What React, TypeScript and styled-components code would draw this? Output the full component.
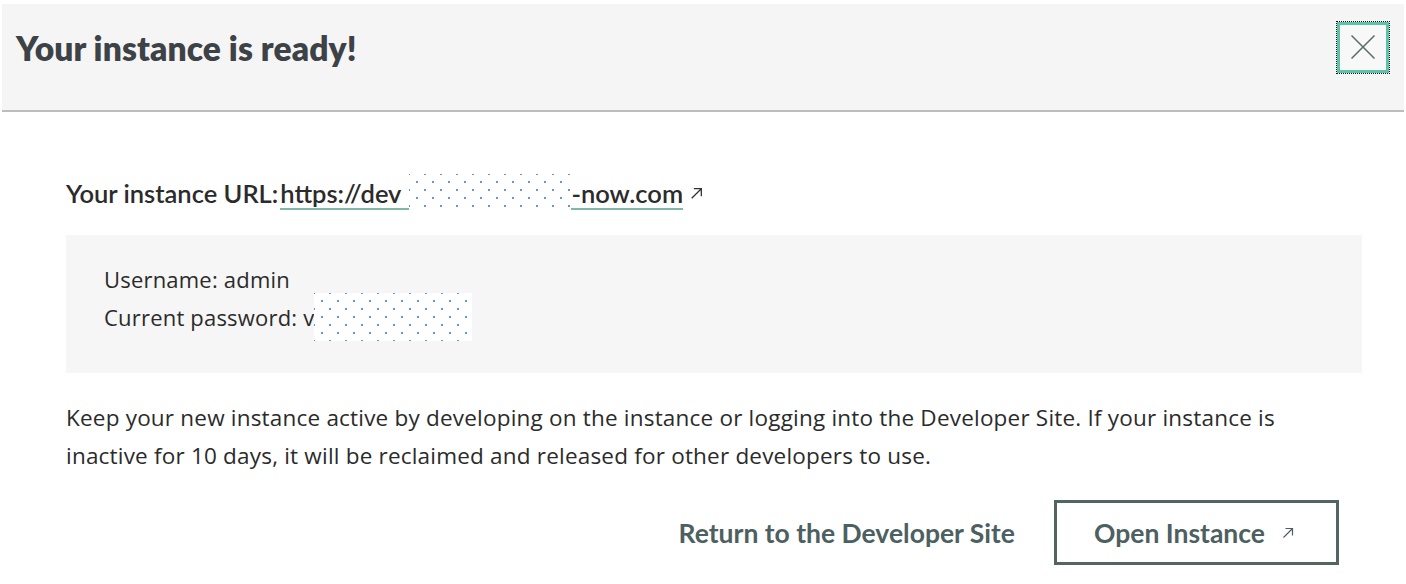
import React from "react";
import styled, { createGlobalStyle } from "styled-components";

const Global = createGlobalStyle`
  html, body { margin: 0; padding: 0; background: #ffffff; }
  body { font-family: "Open Sans", "Noto Sans", sans-serif; }
  * { box-sizing: border-box; }
`;

const Modal = styled.div`
  width: 1406px;
  height: 584px;
  display: flex;
  flex-direction: column;
  padding-top: 4px;
  overflow: hidden;
`;

const Header = styled.header`
  margin: 0 2px;
  height: 108px;
  background: #f5f5f5;
  border-bottom: 2px solid #bdbdbd;
  display: flex;
  align-items: center;
  justify-content: space-between;
  padding: 0 13px 0 14px;
`;

const Title = styled.h1`
  margin: 0 0 18px;
  font-family: Lato, "Open Sans", sans-serif;
  font-weight: 800;
  font-size: 33.6px;
  color: #3d4247;
  letter-spacing: 0.1px;
`;

const CloseButton = styled.button`
  width: 52px;
  height: 51px;
  padding: 0;
  margin: 0 2px 20px 0;
  border: 3px solid #5cc3a9;
  outline: 1.5px dotted #111;
  outline-offset: 0;
  background: #f8f8f8;
  display: flex;
  align-items: center;
  justify-content: center;
  cursor: pointer;
`;

const Body = styled.div`
  padding: 66px 44px 0 66px;
  display: flex;
  flex-direction: column;
`;

const UrlLine = styled.div`
  display: flex;
  align-items: center;
  height: 30px;
  font-family: Lato, "Open Sans", sans-serif;
  font-weight: 600;
  font-size: 25.5px;
  color: #2b2b2b;
`;

const UrlLabel = styled.span`
  margin-right: 2px;
`;

const UrlLink = styled.a`
  display: inline-flex;
  align-items: center;
  color: #2b2b2b;
  text-decoration: none;
`;

const Underlined = styled.span<{ $padRight?: number }>`
  border-bottom: 2px solid #7fb8a8;
  line-height: 30px;
  margin-top: 2px;
  padding-right: ${(p) => p.$padRight ?? 0}px;
`;

const Mask = styled.span<{ $w: number; $h: number }>`
  display: inline-block;
  width: ${(p) => p.$w}px;
  height: ${(p) => p.$h}px;
  flex: none;
  background-color: #ffffff;
  background-image:
    radial-gradient(circle, #5e97d6 1.1px, transparent 1.5px),
    radial-gradient(circle, #5e97d6 1.1px, transparent 1.5px);
  background-size: 16px 16px, 16px 16px;
  background-position: 0 0, 8px 8px;
`;

const ExtArrow = styled.svg<{ $gap: number }>`
  margin-left: ${(p) => p.$gap}px;
  flex: none;
`;

const CredBox = styled.div`
  margin-top: 27px;
  background: #f6f6f6;
  height: 138px;
  padding: 25px 38px;
  display: flex;
  flex-direction: column;
`;

const CredLine = styled.div`
  display: flex;
  align-items: center;
  height: 38px;
  font-family: "Open Sans", "Noto Sans", sans-serif;
  font-size: 22px;
  letter-spacing: 0.2px;
  color: #2b2b2b;
`;

const Paragraph = styled.p`
  margin: 26px 0 0;
  font-family: "Open Sans", "Noto Sans", sans-serif;
  font-size: 22.5px;
  letter-spacing: 0.2px;
  line-height: 38px;
  color: #2b2b2b;
  max-width: 1260px;
`;

const Actions = styled.div`
  margin-top: 25px;
  padding-right: 23px;
  display: flex;
  justify-content: flex-end;
  align-items: center;
  gap: 39px;
`;

const TextButton = styled.button`
  background: none;
  border: none;
  padding: 0;
  font-family: Lato, "Open Sans", sans-serif;
  font-weight: 700;
  font-size: 26.5px;
  color: #4d6061;
  cursor: pointer;
`;

const OutlineButton = styled.button`
  width: 285px;
  height: 65px;
  border: 3px solid #536563;
  background: #ffffff;
  display: flex;
  align-items: center;
  justify-content: center;
  padding: 0 4px 0 0;
  font-family: Lato, "Open Sans", sans-serif;
  font-weight: 700;
  font-size: 26.5px;
  color: #4d6061;
  cursor: pointer;
`;

const Arrow = ({ color, size, gap }: { color: string; size: number; gap: number }) => (
  <ExtArrow $gap={gap} width={size} height={size} viewBox="0 0 14 14" fill="none">
    <path d="M2.5 11.5L11.5 2.5M4.5 2.5H11.5V9.5" stroke={color} strokeWidth="1.2" />
  </ExtArrow>
);

export default function App() {
  return (
    <>
      <Global />
      <Modal>
        <Header>
          <Title>Your instance is ready!</Title>
          <CloseButton aria-label="Close">
            <svg width="24" height="24" viewBox="0 0 24 24">
              <path d="M0.5 0.5L23.5 23.5M23.5 0.5L0.5 23.5" stroke="#5b6a6a" strokeWidth="1.5" />
            </svg>
          </CloseButton>
        </Header>
        <Body>
          <UrlLine>
            <UrlLabel>Your instance URL:</UrlLabel>
            <UrlLink href="#">
              <Underlined $padRight={8}>https://dev</Underlined>
              <Mask $w={162} $h={38} />
              <Underlined>-now.com</Underlined>
              <Arrow color="#333" size={15} gap={6} />
            </UrlLink>
          </UrlLine>
          <CredBox>
            <CredLine>Username: admin</CredLine>
            <CredLine>
              Current password: v
              <Mask $w={158} $h={48} />
            </CredLine>
          </CredBox>
          <Paragraph>
            Keep your new instance active by developing on the instance or logging into the Developer Site. If your instance is inactive for 10 days, it will be reclaimed and released for other developers to use.
          </Paragraph>
          <Actions>
            <TextButton>Return to the Developer Site</TextButton>
            <OutlineButton>
              Open Instance
              <Arrow color="#4d6061" size={14} gap={16} />
            </OutlineButton>
          </Actions>
        </Body>
      </Modal>
    </>
  );
}
